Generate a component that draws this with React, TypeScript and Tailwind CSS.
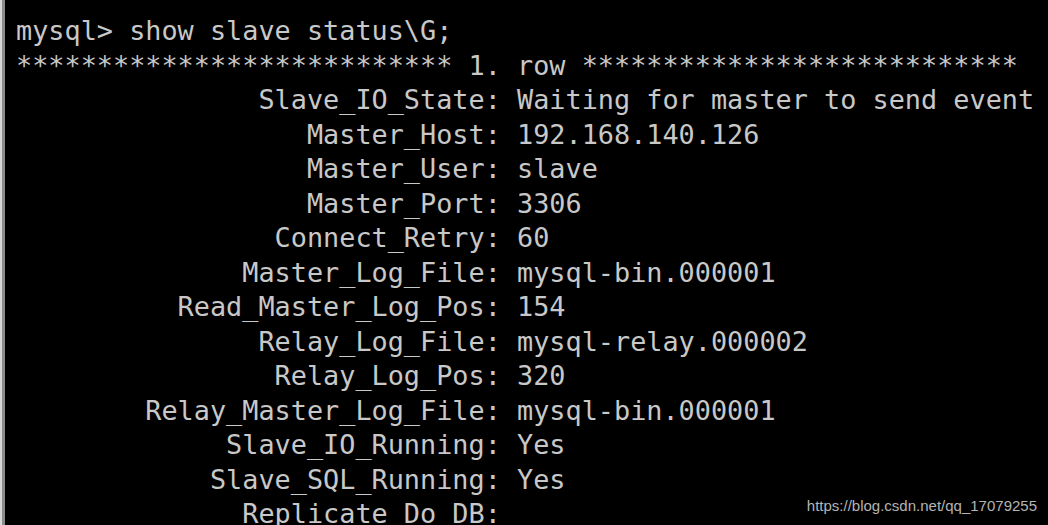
const rows: [string, string][] = [
  ['Slave_IO_State', 'Waiting for master to send event'],
  ['Master_Host', '192.168.140.126'],
  ['Master_User', 'slave'],
  ['Master_Port', '3306'],
  ['Connect_Retry', '60'],
  ['Master_Log_File', 'mysql-bin.000001'],
  ['Read_Master_Log_Pos', '154'],
  ['Relay_Log_File', 'mysql-relay.000002'],
  ['Relay_Log_Pos', '320'],
  ['Relay_Master_Log_File', 'mysql-bin.000001'],
  ['Slave_IO_Running', 'Yes'],
  ['Slave_SQL_Running', 'Yes'],
  ['Replicate_Do_DB', ''],
];

const stars = '*'.repeat(27);

export default function App() {
  return (
    <div className="relative flex h-[525px] w-[1048px] overflow-hidden bg-black">
      {/* window edge */}
      <div className="w-[2px] shrink-0 bg-[#d8d8d8]" />
      <div className="w-[3px] shrink-0 bg-[#8c8c8c]" />
      <pre className="m-0 pl-[11px] pt-[14px] font-['DejaVu_Sans_Mono',monospace] text-[26.85px] leading-[34.5px] text-[#c8c8c8] whitespace-pre">
        {'mysql> show slave status\\G;\n'}
        {`${stars} 1. row ${stars}\n`}
        {rows.map(([k, v]) => `${(k + ':').padStart(30)} ${v}`).join('\n')}
      </pre>
      <div className="absolute bottom-[8px] right-[11px] font-['Liberation_Sans',Arial,sans-serif] text-[15px] text-[#b4b4b4]">
        https://blog.csdn.net/qq_17079255
      </div>
    </div>
  );
}
